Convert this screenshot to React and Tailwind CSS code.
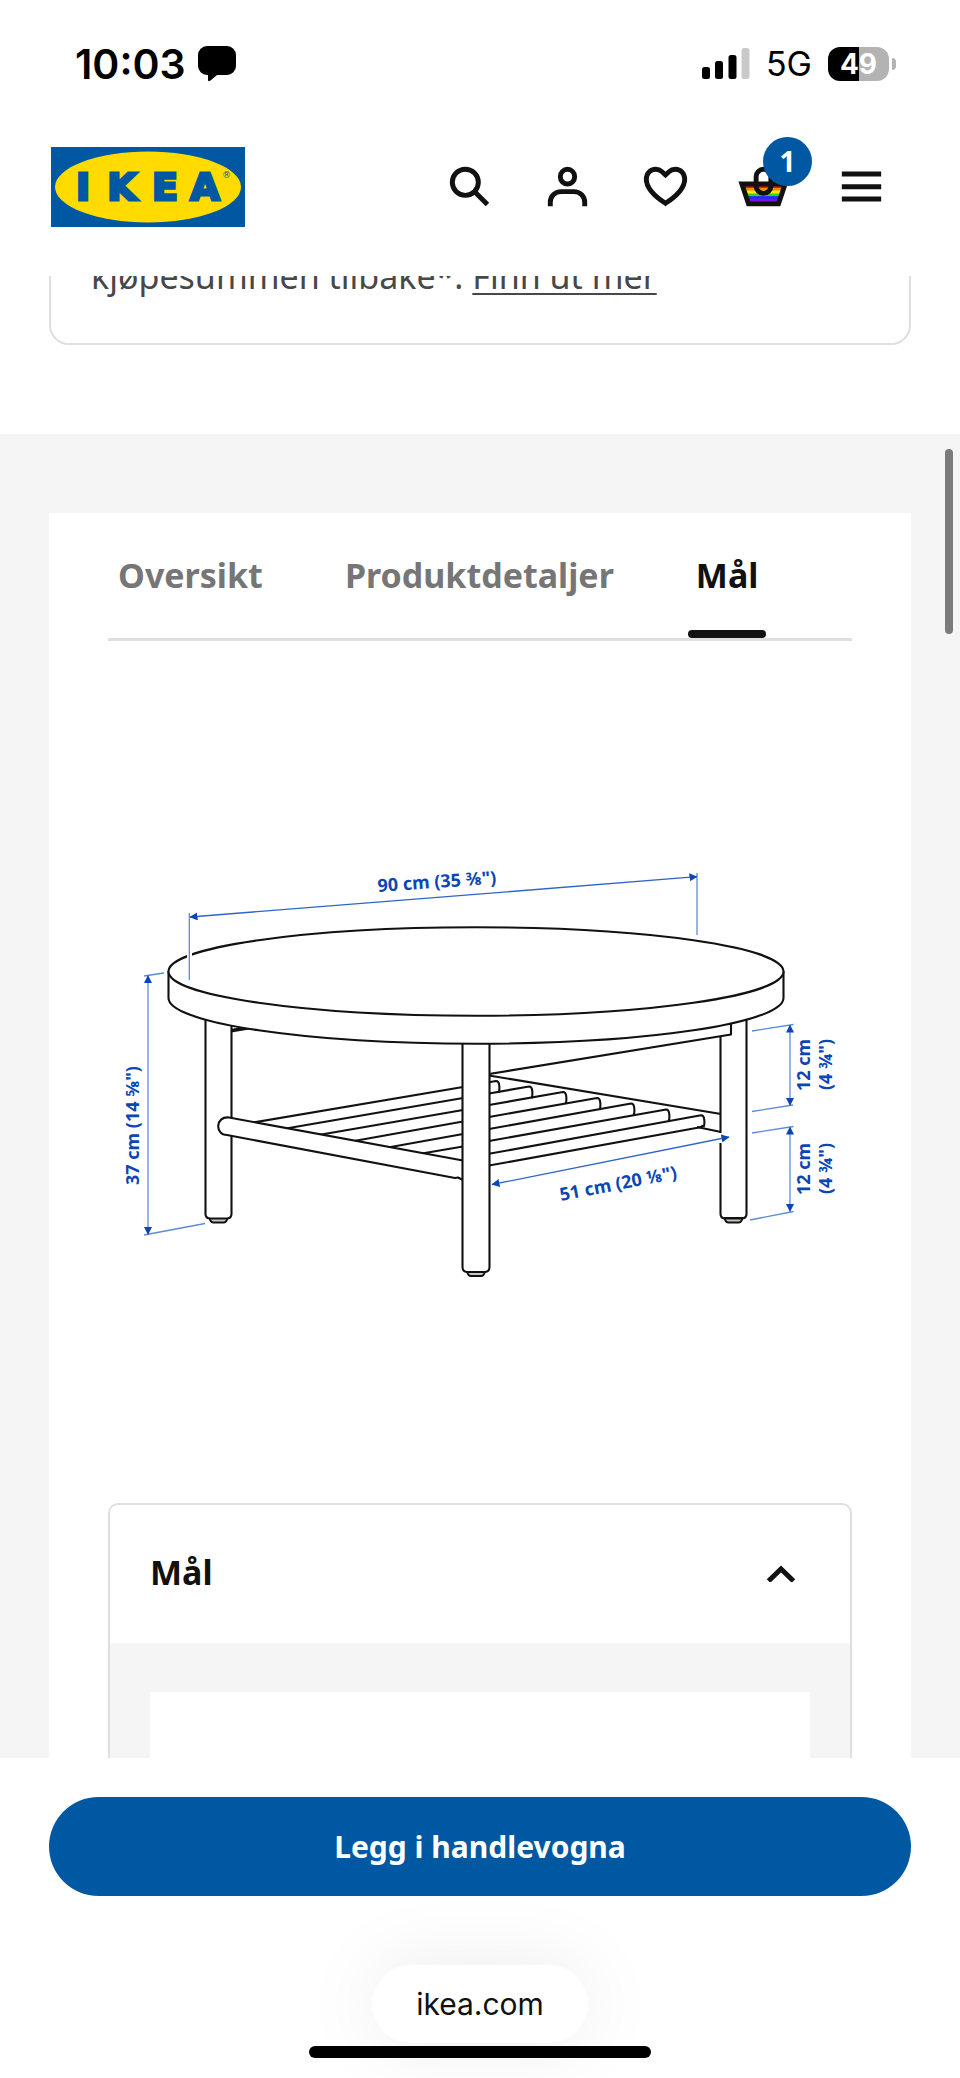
import React, { useState } from 'react';

const TABS = ['Oversikt', 'Produktdetaljer', 'Mål'];

const RAINBOW = ['#e01b00', '#ff8a00', '#fff200', '#3fd40a', '#1f2bff', '#7a12e0'];

// slats seen to the right of the front leg: [start y, end x, end y]
const SLATS = [
  [1082.3, 496, 1081],
  [1093.5, 529, 1086.5],
  [1105, 563, 1092],
  [1117, 597, 1098],
  [1129, 631, 1103.5],
  [1141, 666, 1109.5],
  [1153.8, 701, 1115.3],
];

function IkeaLogo() {
  return (
    <svg viewBox="0 0 194 80" className="w-[194px] h-20" role="img" aria-label="IKEA">
      <rect width="194" height="80" fill="#0058a3" />
      <ellipse cx="97" cy="40" rx="93" ry="35.5" fill="#ffdb00" />
      <text
        x="32 71 114 154"
        y="53"
        textAnchor="middle"
        fontFamily="DejaVu Sans, sans-serif"
        fontWeight="700"
        fontSize="38"
        fill="#0058a3"
        stroke="#0058a3"
        strokeWidth="3"
      >
        IKEA
      </text>
      <text x="171" y="31" fontFamily="DejaVu Sans, sans-serif" fontSize="9" fill="#0058a3">®</text>
    </svg>
  );
}

function Icon({ children }) {
  return (
    <svg viewBox="0 0 24 24" className="w-[59px] h-[59px]" fill="none" stroke="#111" strokeWidth="2">
      {children}
    </svg>
  );
}

function StatusBar() {
  return (
    <div className="h-32 pl-[75px] pr-16 flex items-center justify-between font-[Inter,sans-serif] text-black">
      <div className="flex items-center gap-3">
        <span className="text-[41px] leading-none font-semibold">10:03</span>
        <svg viewBox="0 0 38 36" className="w-[38px] h-9">
          <path d="M9 0h20a9 9 0 0 1 9 9v11a9 9 0 0 1-9 9H19l-6.500 5.500Q10 36 10 34v-5H9a9 9 0 0 1-9-9V9a9 9 0 0 1 9-9z" />
        </svg>
      </div>
      <div className="flex items-center">
        <svg viewBox="0 0 48 32" className="w-12 h-8">
          <rect x="0" y="19" width="8" height="12" rx="2.500" />
          <rect x="13" y="13" width="8" height="18" rx="2.500" />
          <rect x="26.500" y="7" width="8" height="24" rx="2.500" />
          <rect x="39.500" y="0" width="8" height="31" rx="2.500" fill="#c9c9c9" />
        </svg>
        <span className="ml-4 mr-4 text-[34px] leading-none">5G</span>
        <span className="w-[61px] h-[34px] rounded-xl bg-linear-to-r from-black from-50% to-[#b3b3b3] to-50% text-white text-[28px] font-bold flex items-center justify-center">
          49
        </span>
        <span className="ml-[3px] w-1 h-3 rounded-r-full bg-[#b3b3b3]" />
      </div>
    </div>
  );
}

function Header() {
  return (
    <header className="shrink-0 pb-[30px] bg-white">
      <StatusBar />
      <div className="pl-[51px] pr-[50px] h-[118px] flex items-center justify-between">
        <a href="#"><IkeaLogo /></a>
        <nav className="flex pb-0.5">
          <button aria-label="Søk" className="w-[98px] flex justify-center">
            <Icon>
              <circle cx="10.300" cy="10.300" r="5.300" />
              <path d="M14.300 14.300l5 5" />
            </Icon>
          </button>
          <button aria-label="Logg inn" className="w-[98px] flex justify-center">
            <Icon>
              <rect x="9.100" y="5" width="5.800" height="6" rx="2.900" />
              <path d="M5 20v-1.600C5 16 6.800 14.100 9.400 14.100h5.200C17.200 14.100 19 16 19 18.400V20" />
            </Icon>
          </button>
          <button aria-label="Favoritter" className="w-[98px] flex justify-center">
            <Icon>
              <path d="M12 7.300l-1.400-1.300C9.800 5.300 8.900 5 8 5 5.800 5 4.200 6.700 4.200 9c0 3.800 3.800 7.200 7.800 9.800 4-2.600 7.800-6 7.800-9.800 0-2.300-1.600-4-3.800-4-.9 0-1.800.3-2.600 1z" />
            </Icon>
          </button>
          <button aria-label="Handlekurv" className="relative w-[98px] flex justify-center">
            <Icon>
              <clipPath id="basket"><path d="M3.200 11h17.600l-2.700 8H5.900z" /></clipPath>
              <g clipPath="url(#basket)" stroke="none">
                {RAINBOW.map((color, i) => (
                  <rect key={color} x="2" y={11.5 + i * 1.1} width="20" height="1.200" fill={color} />
                ))}
              </g>
              <path d="M3.200 11h17.600l-2.700 8H5.900z" />
              <rect x="9" y="5" width="6" height="9.800" rx="3" />
            </Icon>
            <span className="absolute -top-5 left-[49px] w-[49px] h-[49px] rounded-full bg-[#0058a3] text-white text-[28px] font-bold flex items-center justify-center">
              1
            </span>
          </button>
          <button aria-label="Meny" className="w-[98px] flex justify-center">
            <Icon>
              <path d="M4 6.900h16M4 12.100h16M4 17.100h16" />
            </Icon>
          </button>
        </nav>
      </div>
    </header>
  );
}

function Foot({ x, y }) {
  return <path d={`M${x - 9} ${y}q1 4.500 4 4.500h10q3 0 4-4.500z`} fill="#c8c8c0" strokeWidth="1.800" />;
}

function TableDrawing() {
  return (
    <svg viewBox="108 700 744 744" className="w-full" role="img" aria-label="Mål på salongbord">
      <defs>
        <marker id="arrow" viewBox="0 0 8 8" refX="7.500" refY="4" markerWidth="8" markerHeight="8" markerUnits="userSpaceOnUse" orient="auto-start-reverse">
          <path d="M0 0L8 4 0 8z" fill="#0a47b5" />
        </marker>
      </defs>

      <g fill="#fff" stroke="#111" strokeWidth="2.100" strokeLinejoin="round">
        {/* back rails */}
        <path d="M231 1031.500L252 1028M231 1030L245 1027.500" />
        <path d="M731 1020V1034.500L489 1074" />
        <path d="M489 1075.500L721 1114M697 1127L721 1132" />

        {/* shelf */}
        <path d="M253 1122.500L463 1087M286 1128.500L463 1098M320 1134.700L463 1110M354 1141L463 1121.500M388 1147.500L463 1134M422 1153.500L463 1146.500" />
        {SLATS.map(([y, endX, endY]) => (
          <path key={y} d={`M489 ${y}L${endX} ${endY}q3 0 3.300 5q.4 5-.8 6.700`} fill="none" />
        ))}
        <path d="M489 1165.500L699 1127.500q3.500-.5 4-2.500" fill="none" />

        {/* legs */}
        <Foot x={218.5} y={1218} />
        <path d="M205.500 1010V1214q0 4.500 5 4.500h16q5 0 5-4.500V1010" />
        <path d="M463 1160.500L229 1117.500C215 1116 215 1135 227 1135L455 1178l3-.5 5 2.500z" />
        <Foot x={733.5} y={1218} />
        <path d="M720.500 1036V1133M720.500 1143V1214q0 4.500 5 4.500h16q5 0 5-4.500V1010" fill="none" />
        <Foot x={476} y={1271.5} />
        <path d="M462.500 1030V1267q0 5 5 5h17q5 0 5-5V1030" />

        {/* table top */}
        <path d="M168.500 971V998A307.500 45.700 0 0 0 783.500 998V971" />
        <ellipse cx="476" cy="971.500" rx="307.500" ry="44.200" />
        <path d="M189.500 950V960" stroke="#fff" strokeWidth="5" />
      </g>

      <g stroke="#5f8bd6" strokeWidth="1.300" fill="none">
        <path d="M189.300 913V980M697 873V935" />
        <path d="M144 976l20-3M144 1235l61-11.500" />
        <path d="M752 1031l41.500-6.500M752 1111.500l41-6.500M752 1133l41.500-6.500M750 1220l43.500-8.500" />
        <path d="M190 917L697 876.700" markerStart="url(#arrow)" markerEnd="url(#arrow)" stroke="#2f66c6" />
        <path d="M148 975.500V1234.500" markerStart="url(#arrow)" markerEnd="url(#arrow)" />
        <path d="M790 1025V1105.500" markerStart="url(#arrow)" markerEnd="url(#arrow)" />
        <path d="M790 1127V1211.500" markerStart="url(#arrow)" markerEnd="url(#arrow)" />
        <path d="M492 1184.500L729 1137" markerStart="url(#arrow)" markerEnd="url(#arrow)" stroke="#2f66c6" />
      </g>

      <g fill="#0a47b5" fontFamily="Noto Sans, sans-serif" fontWeight="700" fontSize="18">
        <text transform="translate(378 892) rotate(-4)">90 cm (35 ⅜")</text>
        <text transform="translate(139 1185) rotate(-90)">37 cm (14 ⅝")</text>
        <text transform="translate(561 1201) rotate(-11)">51 cm (20 ⅛")</text>
        <text transform="translate(810 1091) rotate(-90)">12 cm</text>
        <text transform="translate(832 1090) rotate(-90)">(4 ¾")</text>
        <text transform="translate(810 1195) rotate(-90)">12 cm</text>
        <text transform="translate(832 1194) rotate(-90)">(4 ¾")</text>
      </g>
    </svg>
  );
}

function App() {
  const [tab, setTab] = useState('Mål');
  const [open, setOpen] = useState(true);

  return (
    <div className="relative h-screen flex flex-col bg-white text-[#111] font-['Noto_Sans',sans-serif] overflow-hidden">
      <Header />

      <main className="flex-1 min-h-0 overflow-hidden flex flex-col">
        <div className="shrink-0 -mt-[60px] mx-[49px] mb-[89px] border-2 border-[#dfdfdf] rounded-[20px] pt-[34px] pb-[43px] px-10">
          <p className="text-[34px] leading-12 text-[#484848]">
            kjøpesummen tilbake*.{' '}
            <a href="#" className="underline decoration-2 underline-offset-4">Finn ut mer</a>
          </p>
        </div>

        <div className="flex-1 bg-[#f5f5f5] pt-[79px] px-[49px] flex flex-col">
          <section className="flex-1 bg-white px-[59px] flex flex-col">
            <div role="tablist" className="shrink-0 h-32 pl-0.5 flex gap-[66px] border-b-3 border-[#dfdfdf]">
              {TABS.map((name) => (
                <button
                  key={name}
                  role="tab"
                  aria-selected={tab === name}
                  onClick={() => setTab(name)}
                  className={`relative px-2 text-[34px] font-bold ${tab === name ? 'text-[#111]' : 'text-[#767676]'}`}
                >
                  {name}
                  {tab === name && <span className="absolute bottom-0 inset-x-0 h-2 rounded-full bg-[#111]" />}
                </button>
              ))}
            </div>

            <div className="shrink-0 py-[59px]">
              <TableDrawing />
            </div>

            <div className="flex-1 border-2 border-b-0 border-[#dfdfdf] rounded-t-[10px] flex flex-col">
              <button
                aria-expanded={open}
                onClick={() => setOpen(!open)}
                className="shrink-0 h-[138px] pl-10 pr-[54px] pb-1 flex items-center justify-between text-[34px] font-bold"
              >
                Mål
                <svg viewBox="0 0 30 20" className="w-[30px] h-5" fill="none" stroke="#111" strokeWidth="5">
                  <path d="M2.500 19L15 7l12.500 12" />
                </svg>
              </button>
              {open && (
                <div className="flex-1 bg-[#f5f5f5] pt-[49px] px-10 flex">
                  <div className="flex-1 bg-white" />
                </div>
              )}
            </div>
          </section>
        </div>
      </main>

      <footer className="shrink-0 bg-white pt-[39px] px-[49px] pb-5 flex flex-col items-center">
        <button className="w-full h-[99px] rounded-full bg-[#0058a3] text-white text-[30px] font-bold">
          Legg i handlevogna
        </button>
        <div className="mt-[69px] w-[216px] h-[78px] rounded-full bg-white shadow-[0_0_80px_rgba(0,0,0,0.08)] flex items-center justify-center font-[Inter,sans-serif] text-[30px]">
          ikea.com
        </div>
        <div className="relative mt-[3px] w-[342px] h-3 rounded-full bg-black" />
      </footer>

      <div className="absolute right-[7px] top-[449px] w-2 h-[185px] rounded-full bg-[#7b7b7b]" />
    </div>
  );
}

export default App;
